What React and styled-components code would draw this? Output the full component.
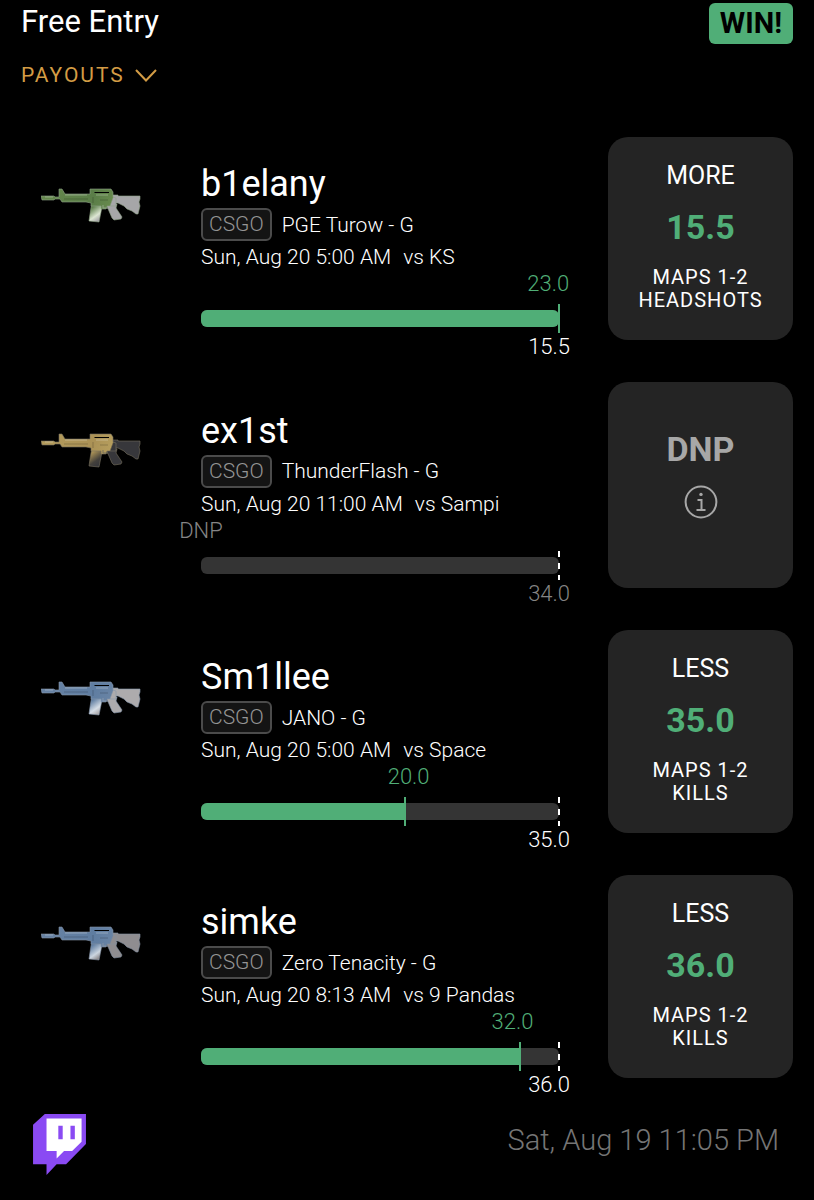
import React from "react";
import styled, { createGlobalStyle } from "styled-components";

const GlobalStyle = createGlobalStyle`
  * {
    box-sizing: border-box;
  }

  body {
    margin: 0;
    background-color: #000;
    color: #fff;
    font-family: Roboto, "Liberation Sans", sans-serif;
  }

  button {
    padding: 0;
    border: none;
    background: none;
    font-family: inherit;
    cursor: pointer;
  }

  svg {
    display: block;
  }
`;

const Page = styled.main`
  padding: 3px 21px 24px;
`;

const Header = styled.header`
  display: flex;
  justify-content: space-between;
  align-items: flex-start;
`;

const EntryTitle = styled.h1`
  margin: 0;
  font-size: 31px;
  line-height: 38px;
  font-weight: 400;
`;

const WinBadge = styled.strong`
  padding: 0 11px;
  border-radius: 6px;
  background-color: #50ae77;
  color: #000;
  font-size: 29px;
  line-height: 41px;
  font-weight: 700;
`;

const PayoutsButton = styled.button`
  display: flex;
  align-items: center;
  gap: 10px;
  margin-top: 18px;
  color: #d39c45;
  font-size: 21px;
  line-height: 26px;
  letter-spacing: 2px;
`;

const PickList = styled.ul`
  display: grid;
  gap: 22px;
  margin: 49px 0 0;
  padding: 0;
  list-style: none;
`;

const Pick = styled.li`
  display: grid;
  grid-template-columns: 180px minmax(0, 1fr) 185px;
  align-items: start;
`;

const Avatar = styled.div`
  padding: 51px 0 0 20px;
`;

const Info = styled.div`
  align-self: center;
  padding: 27px 49px 0 0;
`;

const PlayerName = styled.h2`
  margin: 0 0 4px;
  font-size: 36px;
  line-height: 40px;
  font-weight: 400;
`;

const TeamLine = styled.div`
  display: flex;
  align-items: center;
  gap: 10px;
  margin-bottom: 3px;
  font-size: 21px;
  font-weight: 300;
`;

const GameTag = styled.span`
  padding: 0 6px;
  border: 2px solid #4b4b4b;
  border-radius: 6px;
  background-color: #141414;
  color: #959595;
  line-height: 29px;
`;

const MatchTime = styled.p`
  display: flex;
  gap: 12px;
  margin: 0;
  font-size: 21px;
  line-height: 26px;
  font-weight: 300;
  white-space: nowrap;
`;

const Progress = styled.div`
  font-size: 22px;
  line-height: 26px;
  font-weight: 300;
`;

const ResultRow = styled.div`
  position: relative;
  height: 26px;
  margin: 1px 0 13px;
`;

const ResultLabel = styled.span`
  position: absolute;
  transform: translateX(-50%);
  color: ${({ $muted }) => ($muted ? "#858585" : "#50ae77")};
`;

const Track = styled.div`
  position: relative;
  height: 17px;
  border-radius: 6px;
  background-color: #343434;
`;

const Fill = styled.div`
  height: 100%;
  border-radius: ${({ $full }) => ($full ? "6px" : "6px 0 0 6px")};
  background-color: #50ae77;
`;

const Marker = styled.span`
  position: absolute;
  top: -6px;
  width: 2px;
  height: 29px;
  background: ${({ $dashed }) =>
    $dashed
      ? "repeating-linear-gradient(#fff 0 6px, transparent 6px 12px)"
      : "#50ae77"};
`;

const LineLabel = styled.div`
  margin: 7px -11px 0 0;
  color: ${({ $muted }) => ($muted ? "#858585" : "#fff")};
  text-align: right;
`;

const Card = styled.section`
  display: flex;
  flex-direction: column;
  align-items: center;
  min-height: ${({ $dnp }) => ($dnp ? "206px" : "203px")};
  margin-bottom: 20px;
  padding: ${({ $dnp }) => ($dnp ? "47px" : "24px")} 16px 20px;
  border-radius: 20px;
  background-color: #242424;
  text-align: center;
`;

const Side = styled.div`
  font-size: 25px;
  line-height: 30px;
`;

const LineValue = styled.div`
  margin: ${({ $dnp }) => ($dnp ? "0 0 16px" : "16px 0 19px")};
  color: ${({ $dnp }) => ($dnp ? "#a7a7a7" : "#50ae77")};
  font-size: 34px;
  line-height: 40px;
  font-weight: 700;
`;

const Stat = styled.div`
  font-size: 20px;
  line-height: 23px;
  letter-spacing: 1px;
`;

const Footer = styled.footer`
  display: flex;
  justify-content: space-between;
  padding: 16px 14px 0 12px;
`;

const Timestamp = styled.time`
  color: #757575;
  font-size: 29px;
  line-height: 52px;
  font-weight: 300;
`;

const skins = {
  green: { front: "#66894d", mid: "#5a7d48", tip: "#dce6d2", stock: "#a6a6a8", edge: "#8fa386" },
  gold: { front: "#b59d5d", mid: "#ab9256", tip: "#44413c", stock: "#37373b", edge: "#77705e" },
  blue: { front: "#6883a4", mid: "#5f7da1", tip: "#d5dde6", stock: "#adabad", edge: "#8797ac" },
  steel: { front: "#6883a4", mid: "#5f7da1", tip: "#cbd5e0", stock: "#8f8d90", edge: "#8390a2" },
};

const picks = [
  {
    name: "b1elany",
    team: "PGE Turow - G",
    time: "Sun, Aug 20 5:00 AM",
    opponent: "vs KS",
    skin: "green",
    result: "23.0",
    labelAt: 97,
    fill: 100,
    line: "15.5",
    side: "MORE",
    stat: "HEADSHOTS",
  },
  {
    name: "ex1st",
    team: "ThunderFlash - G",
    time: "Sun, Aug 20 11:00 AM",
    opponent: "vs Sampi",
    skin: "gold",
    result: "DNP",
    labelAt: 0,
    fill: 0,
    line: "34.0",
    dnp: true,
  },
  {
    name: "Sm1llee",
    team: "JANO - G",
    time: "Sun, Aug 20 5:00 AM",
    opponent: "vs Space",
    skin: "blue",
    result: "20.0",
    labelAt: 58,
    fill: 57,
    line: "35.0",
    side: "LESS",
    stat: "KILLS",
  },
  {
    name: "simke",
    team: "Zero Tenacity - G",
    time: "Sun, Aug 20 8:13 AM",
    opponent: "vs 9 Pandas",
    skin: "steel",
    result: "32.0",
    labelAt: 87,
    fill: 89,
    line: "36.0",
    side: "LESS",
    stat: "KILLS",
  },
];

function Rifle({ skin }) {
  const { front, mid, tip, stock, edge } = skins[skin];
  const paint = `rifle-${skin}`;
  const mag = `magazine-${skin}`;

  return (
    <svg width="100" height="36" viewBox="0 0 100 36" aria-hidden="true">
      <defs>
        <linearGradient id={paint} gradientUnits="userSpaceOnUse" x1="0" y1="0" x2="70" y2="26">
          <stop offset="0" stopColor={front} />
          <stop offset="0.7" stopColor={mid} />
          <stop offset="0.94" stopColor={front} />
          <stop offset="0.96" stopColor={stock} />
        </linearGradient>
        <linearGradient id={mag} x1="0" y1="0" x2="0.5" y2="1">
          <stop offset="0.3" stopColor={mid} />
          <stop offset="0.75" stopColor={tip} />
          <stop offset="1" stopColor={stock} />
        </linearGradient>
      </defs>
      <g stroke={edge} strokeWidth="0.6" strokeLinejoin="round">
        <path
          fill={stock}
          d="M69 7h8v1h22v3l-1 3 1 4-2 8h-2l-4-3-5-2-3-3-6-3h-5z"
        />
        <path fill={stock} d="M65 16h11l-1 4 6 9-1 2-7 1-2-2z" />
        <path fill={`url(#${mag})`} d="M51 14h11l-1 5-3 15-10-1 1-7z" />
        <path
          fill={`url(#${paint})`}
          d="M0 8h13l1 1h4V1h3l3 5h25V1h21l2 3v5l3 1v8h-9l-1 3h-5v-3H50v-3l-5-1H21l-2-3h-5l-1 1H1z"
        />
      </g>
      <path fill="#000" d="M54 4h14v1H53z" />
      <path stroke="#000" strokeOpacity="0.2" fill="none" d="M23 11h24M52 9v6M59 12h8" />
      <path stroke="#fff" strokeOpacity="0.3" fill="none" d="M4 9h8M24 7h22M55 7h12" />
      <path fill="none" stroke={edge} d="M62 17v3h5" />
    </svg>
  );
}

function InfoIcon() {
  return (
    <svg width="34" height="34" viewBox="0 0 34 34" fill="none" stroke="#a7a7a7" strokeWidth="2">
      <circle cx="17" cy="17" r="15.4" />
      <path d="M13.5 15h4v10M12.5 25h9" />
      <circle cx="17" cy="9.4" r="1.7" fill="#a7a7a7" stroke="none" />
    </svg>
  );
}

function TwitchLogo() {
  return (
    <svg width="53" height="61" viewBox="0 0 157 181" role="img" aria-label="Twitch">
      <path fill="#8a4af3" d="M0 32L35 0h122v89l-59 60H70l-30 32v-32H0z" />
      <path fill="#fff" d="M40 13h104v69l-28 28H92l-22 22v-22H40z" />
      <path fill="#8a4af3" d="M75 35h13v40H75zM111 35h13v40h-13z" />
    </svg>
  );
}

function PickRow({ pick }) {
  return (
    <Pick>
      <Avatar>
        <Rifle skin={pick.skin} />
      </Avatar>

      <Info>
        <PlayerName>{pick.name}</PlayerName>
        <TeamLine>
          <GameTag>CSGO</GameTag>
          <span>{pick.team}</span>
        </TeamLine>
        <MatchTime>
          <span>{pick.time}</span>
          <span>{pick.opponent}</span>
        </MatchTime>
        <Progress>
          <ResultRow>
            <ResultLabel $muted={pick.dnp} style={{ left: `${pick.labelAt}%` }}>
              {pick.result}
            </ResultLabel>
          </ResultRow>
          <Track>
            <Fill $full={pick.fill === 100} style={{ width: `${pick.fill}%` }} />
            {pick.fill < 100 && <Marker $dashed style={{ left: "calc(100% - 1px)" }} />}
            {pick.fill > 0 && <Marker style={{ left: `calc(${pick.fill}% - 1px)` }} />}
          </Track>
          <LineLabel $muted={pick.dnp}>{pick.line}</LineLabel>
        </Progress>
      </Info>

      {pick.dnp ? (
        <Card $dnp>
          <LineValue $dnp>DNP</LineValue>
          <button type="button" aria-label="About DNP">
            <InfoIcon />
          </button>
        </Card>
      ) : (
        <Card>
          <Side>{pick.side}</Side>
          <LineValue>{pick.line}</LineValue>
          <Stat>
            MAPS 1-2
            <br />
            {pick.stat}
          </Stat>
        </Card>
      )}
    </Pick>
  );
}

export default function App() {
  return (
    <>
      <GlobalStyle />
      <Page>
        <Header>
          <EntryTitle>Free Entry</EntryTitle>
          <WinBadge>WIN!</WinBadge>
        </Header>
        <PayoutsButton type="button">
          PAYOUTS
          <svg width="22" height="13" viewBox="0 0 22 13" fill="none" stroke="currentColor" strokeWidth="2">
            <path d="M1 1l10 10.500L21 1" />
          </svg>
        </PayoutsButton>

        <PickList>
          {picks.map((pick) => (
            <PickRow key={pick.name} pick={pick} />
          ))}
        </PickList>

        <Footer>
          <TwitchLogo />
          <Timestamp>Sat, Aug 19 11:05 PM</Timestamp>
        </Footer>
      </Page>
    </>
  );
}
